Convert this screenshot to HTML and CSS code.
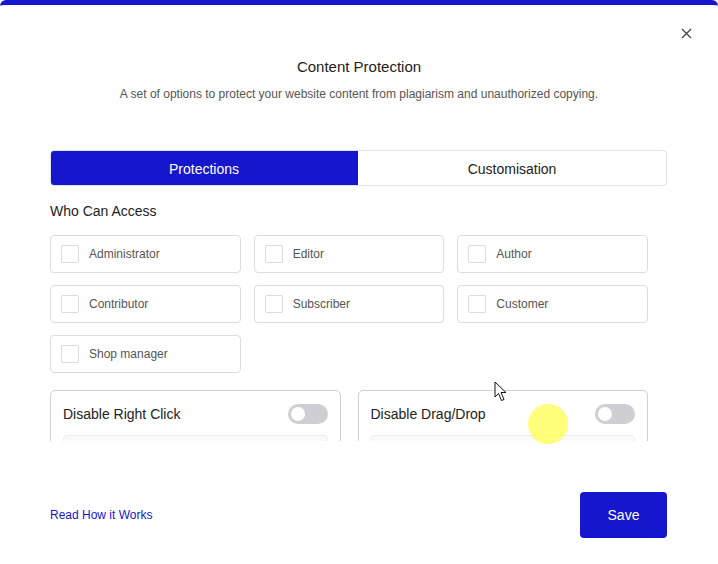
FILE: index.html
```html
<!DOCTYPE html>
<html lang="en">
<head>
  <meta charset="UTF-8" />
  <title>Content Protection</title>
  <link rel="stylesheet" href="styles.css">
</head>
<body>

  <div class="modal">
    <button class="close-btn" aria-label="Close">
      <svg width="11" height="11" viewBox="0 0 11 11"><path d="M1 1L10 10M10 1L1 10" stroke="#444" stroke-width="1.3"/></svg>
    </button>

    <div class="head">
      <h1>Content Protection</h1>
      <p class="sub">A set of options to protect your website content from plagiarism and unauthorized copying.</p>
    </div>

    <div class="body">
      <div class="tabs">
        <div class="tab active">Protections</div>
        <div class="tab">Customisation</div>
      </div>

      <h2 class="section-title">Who Can Access</h2>

      <div class="scroll">
        <div class="roles">
          <label class="role"><span class="box"></span>Administrator</label>
          <label class="role"><span class="box"></span>Editor</label>
          <label class="role"><span class="box"></span>Author</label>
          <label class="role"><span class="box"></span>Contributor</label>
          <label class="role"><span class="box"></span>Subscriber</label>
          <label class="role"><span class="box"></span>Customer</label>
          <label class="role"><span class="box"></span>Shop manager</label>
        </div>

        <div class="options">
          <div class="option">
            <div class="option-head">
              <span>Disable Right Click</span>
              <span class="switch"></span>
            </div>
            <div class="option-inner"></div>
          </div>
          <div class="option">
            <div class="option-head">
              <span>Disable Drag/Drop</span>
              <span class="switch"></span>
            </div>
            <div class="option-inner"></div>
          </div>
        </div>
      </div>
    </div>

    <div class="foot">
      <a class="help" href="#">Read How it Works</a>
      <button class="save">Save</button>
    </div>

    <span class="click-dot"></span>
    <svg class="cursor" width="14" height="21" viewBox="0 0 14 21"><path d="M1 1L1 16L4.5 12.5L7.5 19.5L10 18.5L7 11.5L12 11.5Z" fill="#fff" stroke="#111" stroke-width="1" stroke-linejoin="round"/></svg>
  </div>

</body>
</html>
```

FILE: styles.css
```css
:root {
  --blue: #1616cc;
  --text: #222;
  --subtext: #555;
  --line: #dcdcdc;
}

* {
  box-sizing: border-box;
  margin: 0;
  padding: 0;
}

body {
  font-family: 'Liberation Sans', Arial, sans-serif;
  background: #fff;
  color: var(--text);
}

.modal {
  position: relative;
  width: 718px;
  height: 564px;
  background: #fff;
  border-top: 5px solid var(--blue);
  border-radius: 6px 6px 0 0;
  overflow: hidden;
}

.close-btn {
  position: absolute;
  top: 23px;
  right: 26px;
  background: none;
  border: none;
  width: 11px;
  height: 11px;
  cursor: pointer;
  display: flex;
}

.head {
  text-align: center;
  padding-top: 52px;
}

h1 {
  font-size: 15px;
  font-weight: normal;
  color: var(--text);
  line-height: 20px;
}

.sub {
  font-size: 12px;
  color: var(--subtext);
  margin-top: 9px;
  line-height: 16px;
}

.body {
  padding: 48px 50px 0;
}

.tabs {
  display: flex;
  width: 617px;
  height: 36px;
  border: 1px solid #e2e2e2;
  border-radius: 4px;
  overflow: hidden;
}

.tab {
  flex: 1;
  display: flex;
  align-items: center;
  justify-content: center;
  padding-top: 2px;
  font-size: 14px;
  color: var(--text);
}

.tab.active {
  background: var(--blue);
  color: #fff;
  margin: -1px 0 -1px -1px;
}

.section-title {
  font-size: 14px;
  font-weight: normal;
  line-height: 18px;
  margin-top: 16px;
}

.scroll {
  width: 598px;
  height: 206px;
  margin-top: 15px;
  overflow: hidden;
}

.roles {
  display: grid;
  grid-template-columns: repeat(3, 1fr);
  gap: 12px 13px;
}

.role {
  display: flex;
  align-items: center;
  height: 38px;
  padding-left: 10px;
  border: 1px solid var(--line);
  border-radius: 4px;
  font-size: 12px;
  color: var(--subtext);
}

.box {
  width: 18px;
  height: 18px;
  border: 1px solid var(--line);
  border-radius: 2px;
  margin-right: 10px;
}

.options {
  display: grid;
  grid-template-columns: 1fr 1fr;
  gap: 17px;
  margin-top: 17px;
}

.option {
  border: 1px solid #d0d0d0;
  border-radius: 5px;
  padding: 12px 12px 0 12px;
  height: 80px;
}

.option-head {
  display: flex;
  justify-content: space-between;
  align-items: center;
  font-size: 14px;
  height: 22px;
}

.switch {
  position: relative;
  width: 40px;
  height: 20px;
  border-radius: 10px;
  background: #cfcfd3;
}

.switch::after {
  content: "";
  position: absolute;
  left: 3px;
  top: 3px;
  width: 14px;
  height: 14px;
  border-radius: 50%;
  background: #fff;
}

.option-inner {
  margin-top: 10px;
  height: 40px;
  border: 1px solid #ececec;
  border-radius: 4px;
  background: #fafafa;
}

.foot {
  display: flex;
  justify-content: space-between;
  align-items: center;
  padding: 51px 51px 0 50px;
}

.help {
  font-size: 12px;
  color: var(--blue);
  text-decoration: none;
}

.save {
  width: 87px;
  height: 46px;
  background: var(--blue);
  color: #fff;
  border: none;
  border-radius: 4px;
  font-family: inherit;
  font-size: 14px;
  cursor: pointer;
}

.click-dot {
  position: absolute;
  left: 528px;
  top: 399px;
  width: 40px;
  height: 40px;
  border-radius: 50%;
  background: rgba(255, 255, 90, 0.8);
}

.cursor {
  position: absolute;
  left: 494px;
  top: 376px;
}
```
